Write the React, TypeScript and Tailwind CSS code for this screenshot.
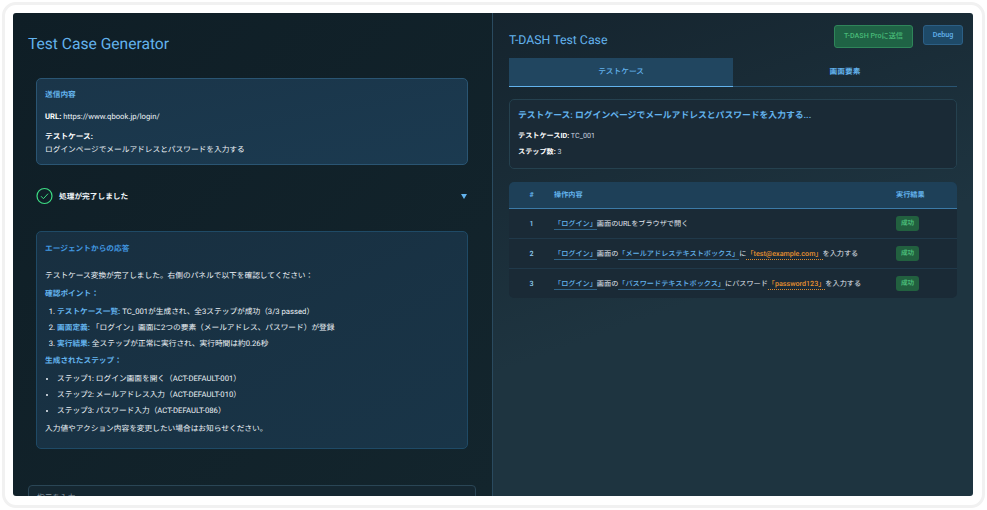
import React from "react";

function Ref({ children }: { children: React.ReactNode }) {
  return <span className="border-b border-[#2f6388] text-[#63b3ed] pb-[1px] font-medium">{children}</span>;
}
function Val({ children }: { children: React.ReactNode }) {
  return <span className="border-b border-dotted border-[#e08a2a] text-[#e8912f] font-medium pb-[1px]">{children}</span>;
}
function Badge() {
  return <span className="inline-flex items-center justify-center w-[23px] h-[15px] rounded-[3px] bg-[#22603f] text-[#48bb78] text-[6.6px] font-bold">成功</span>;
}

function Row({ n, children, last }: { n: number; children: React.ReactNode; last?: boolean }) {
  return (
    <div className={`flex items-center text-[7.15px] text-[#e2e8f0] ${last ? "h-[29px]" : "h-[30px] border-b border-[#20394a]"}`}>
      <div className="w-[45px] pt-[1px] text-center text-[#90cdf4] font-medium">{n}</div>
      <div className="flex-1 pt-[1px] whitespace-nowrap">{children}</div>
      <div className="w-[61px] flex"><Badge /></div>
    </div>
  );
}

export default function App() {
  return (
    <div className="w-[987px] h-[510px] bg-white overflow-hidden p-[2px] [text-rendering:geometricPrecision] font-['Roboto','Noto_Sans_CJK_JP',sans-serif]">
      <div className="h-[506px] w-[983px] border-[3px] border-[#f1f1f1] rounded-[14px] pt-[8px] pl-[8px] pr-[7px] pb-[9px]">
        <div className="h-[483px] w-[960px] flex rounded-[3px] overflow-hidden">
          <div className="w-[480px] h-full bg-gradient-to-br from-[#0f1e26] to-[#13252d] border-r border-[#2a4a5f] pl-[15px] pr-[16px] pt-[20px] overflow-hidden shrink-0">
            <h1 className="text-[15.6px] leading-[22px] font-normal text-[#63b3ed]">Test Case Generator</h1>

            <div className="mt-[23px] mx-[8px] h-[87px] rounded-[5px] border border-[#2a5573] bg-gradient-to-br from-[#1a3549] to-[#1b3a50] px-[8px] pt-[10px] text-[7.7px] text-[#edf2f7]">
              <div className="text-[#63b3ed] font-bold leading-[12px]">送信内容</div>
              <p className="mt-[10px] leading-[12px]"><b className="text-white font-bold">URL:</b> https://www.qbook.jp/login/</p>
              <p className="mt-[8px] leading-[12px]"><b className="text-white font-bold">テストケース:</b></p>
              <p className="mt-[1px] leading-[12px]">ログインページでメールアドレスとパスワードを入力する</p>
            </div>

            <div className="mt-[21px] mx-[8px] h-[20px] flex items-center">
              <svg width="17" height="18" viewBox="0 0 17 18" fill="none">
                <circle cx="8.5" cy="9" r="7.5" stroke="#3ddc84" strokeWidth="1.2" />
                <path d="M5 9.2l2.4 2.5 4.6-5" stroke="#3ddc84" strokeWidth="1" />
              </svg>
              <span className="ml-[6px] pt-[1px] text-[7.7px] font-bold text-[#edf2f7]">処理が完了しました</span>
              <span className="ml-auto w-0 h-0 border-x-[3px] border-x-transparent border-t-[5px] border-t-[#63b3ed] mr-[1px]" />
            </div>

            <div className="mt-[25px] mx-[8px] h-[218px] rounded-[5px] border border-[#1f4a66] bg-gradient-to-br from-[#182f40] to-[#193548] px-[8px] pt-[11px] text-[7.7px] leading-[12px] text-[#edf2f7]">
              <div className="text-[#4299e1] font-bold">エージェントからの応答</div>
              <p className="mt-[15px]">テストケース変換が完了しました。右側のパネルで以下を確認してください：</p>
              <p className="mt-[6px] text-[#63b3ed] font-bold">確認ポイント：</p>
              <ol className="mt-[6px] pl-[12px] list-decimal space-y-[4px]">
                <li><b className="text-[#63b3ed] font-bold">テストケース一覧:</b> TC_001が生成され、全3ステップが成功（3/3 passed）</li>
                <li><b className="text-[#63b3ed] font-bold">画面定義:</b> 「ログイン」画面に2つの要素（メールアドレス、パスワード）が登録</li>
                <li><b className="text-[#63b3ed] font-bold">実行結果:</b> 全ステップが正常に実行され、実行時間は約0.26秒</li>
              </ol>
              <p className="mt-[5px] text-[#63b3ed] font-bold">生成されたステップ：</p>
              <ul className="mt-[6px] pl-[12px] list-disc space-y-[4px]">
                <li>ステップ1: ログイン画面を開く（ACT-DEFAULT-001）</li>
                <li>ステップ2: メールアドレス入力（ACT-DEFAULT-010）</li>
                <li>ステップ3: パスワード入力（ACT-DEFAULT-086）</li>
              </ul>
              <p className="mt-[6px]">入力値やアクション内容を変更したい場合はお知らせください。</p>
            </div>

            <div className="mt-[36px] h-[40px] rounded-[4px] border border-[#2a4656] bg-[#152731] px-[8px] pt-[6px] text-[7.7px] text-[#8a98a3]">指示を入力</div>
          </div>

          <div className="flex-1 h-full bg-[linear-gradient(160deg,#15242e,#1e3440_55%)] pl-[16px] pr-[16px] overflow-hidden">
            <div className="flex items-start h-[45px]">
              <h2 className="mt-[20px] text-[12.3px] leading-[16px] font-normal text-[#63b3ed]">T-DASH Test Case</h2>
              <button className="ml-auto mt-[12px] w-[79px] h-[23px] rounded-[3px] border border-[#2f855a] bg-[#1f6345] text-[7.15px] text-[#48bb78] font-medium">T-DASH Proに送信</button>
              <button className="ml-[10px] -mr-[6px] mt-[12px] w-[40px] h-[20px] rounded-[3px] border border-[#2c5f85] bg-[#1e4a68] text-[7.15px] text-[#63b3ed] font-medium">Debug</button>
            </div>

            <div className="flex h-[29px] border-b border-[#2a5573]">
              <div className="w-[224px] h-[29px] bg-[#214660] border-b-[1px] border-[#63b3ed] flex items-center justify-center text-[7.7px] text-[#63b3ed] font-medium">テストケース</div>
              <div className="flex-1 flex items-center justify-center text-[7.7px] font-bold text-[#63b3ed]">画面要素</div>
            </div>

            <div className="mt-[12px] h-[70px] rounded-[5px] border border-[#25414f] bg-[#1a2a36] px-[8px] pt-[9px] text-[7.15px] leading-[12px]">
              <div className="text-[8.8px] leading-[14px] font-bold text-[#63b3ed]">テストケース: ログインページでメールアドレスとパスワードを入力する...</div>
              <p className="mt-[7px] text-[#cbd5e0]"><b className="text-white font-bold">テストケースID:</b> TC_001</p>
              <p className="mt-[4px] text-[#cbd5e0]"><b className="text-white font-bold">ステップ数:</b> 3</p>
            </div>

            <div className="mt-[13px] rounded-[5px] overflow-hidden bg-[#1a2a36]">
              <div className="flex items-center h-[27px] bg-[#1e4058] border-b border-[#3c7aa6] text-[7.15px] font-bold text-[#63b3ed]">
                <div className="w-[45px] text-center">#</div>
                <div className="flex-1">操作内容</div>
                <div className="w-[61px]">実行結果</div>
              </div>
              <Row n={1}><Ref>「ログイン」</Ref>画面のURLをブラウザで開く</Row>
              <Row n={2}><Ref>「ログイン」</Ref>画面の<Ref>「メールアドレステキストボックス」</Ref>に<Val>「test@example.com」</Val>を入力する</Row>
              <Row n={3} last><Ref>「ログイン」</Ref>画面の<Ref>「パスワードテキストボックス」</Ref>にパスワード<Val>「password123」</Val>を入力する</Row>
            </div>
          </div>
        </div>
      </div>
    </div>
  );
}
